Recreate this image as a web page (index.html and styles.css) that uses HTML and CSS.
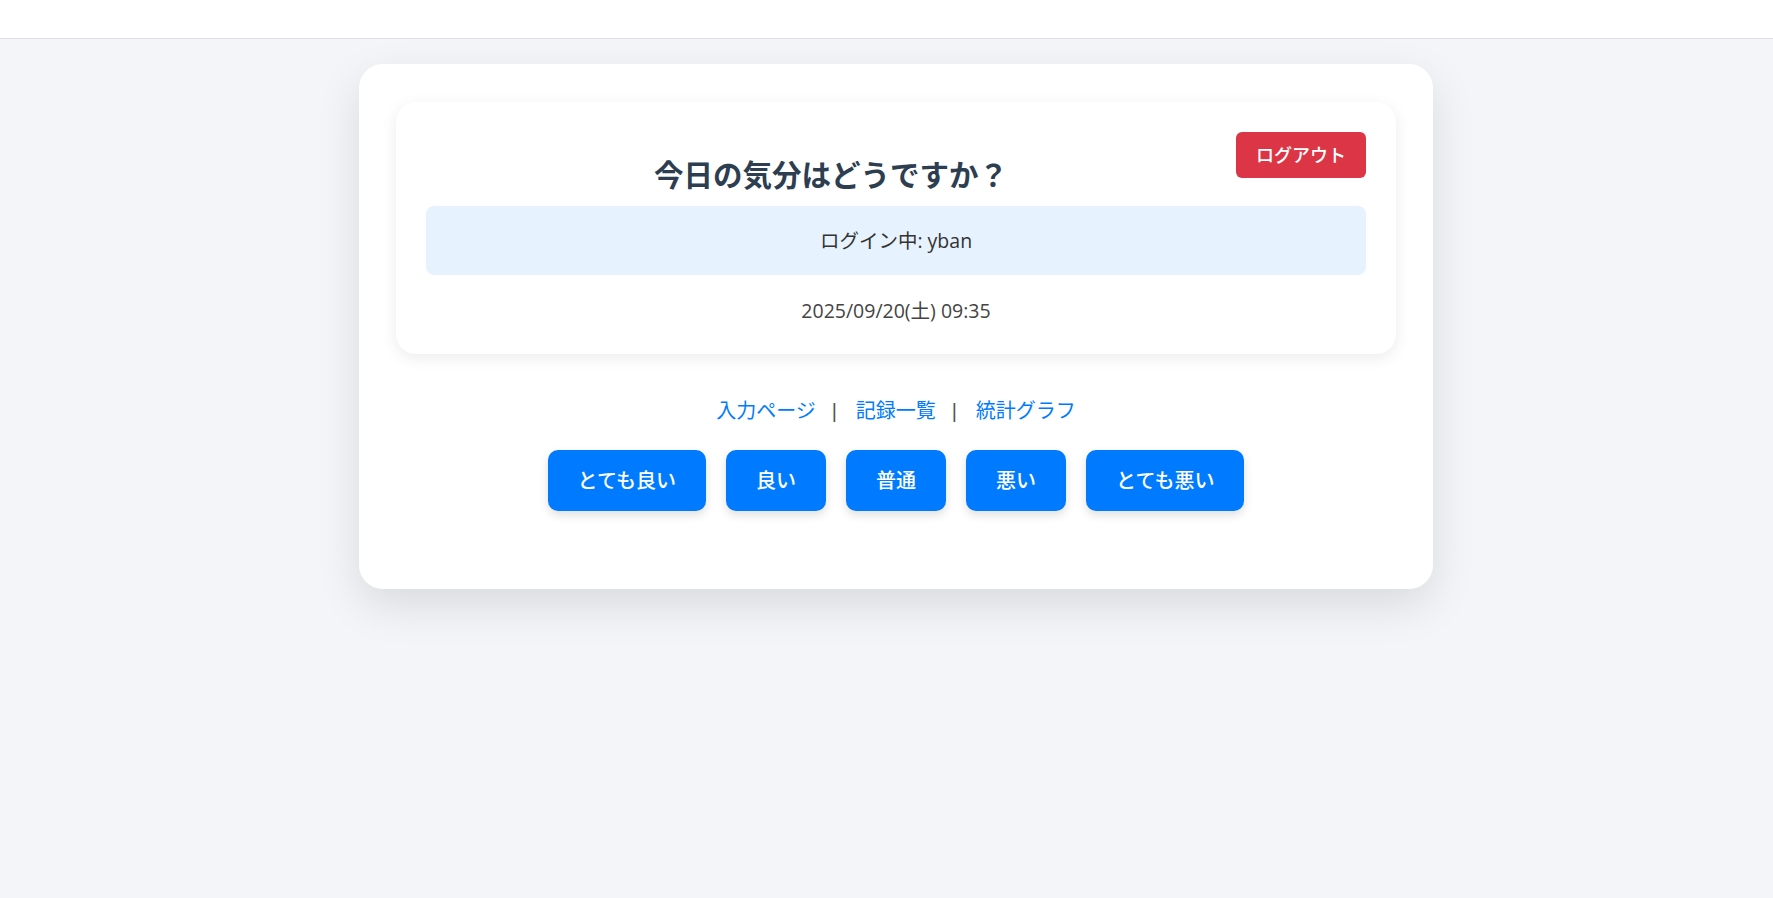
FILE: index.html
```html
<!DOCTYPE html>
<html lang="ja">
<head>
<meta charset="utf-8">
<title>気分記録</title>
<link rel="stylesheet" href="styles.css">
</head>
<body>
<header class="topbar"></header>
<main class="page">
  <section class="panel">
    <div class="status-card">
      <div class="status-head">
        <h1 class="title">今日の気分はどうですか？</h1>
        <button class="logout" type="button">ログアウト</button>
      </div>
      <div class="user-box">ログイン中: yban</div>
      <p class="date">2025/09/20(土) 09:35</p>
    </div>
    <nav class="links">
      <a href="#" class="link">入力ページ</a>
      <span class="sep">|</span>
      <a href="#" class="link">記録一覧</a>
      <span class="sep">|</span>
      <a href="#" class="link">統計グラフ</a>
    </nav>
    <div class="moods">
      <button class="mood" type="button">とても良い</button>
      <button class="mood" type="button">良い</button>
      <button class="mood" type="button">普通</button>
      <button class="mood" type="button">悪い</button>
      <button class="mood" type="button">とても悪い</button>
    </div>
  </section>
</main>
</body>
</html>
```

FILE: styles.css
```css
* {
  box-sizing: border-box;
}

html, body {
  margin: 0;
  padding: 0;
}

body {
  background: #f4f5f9;
  font-family: "Open Sans", "Noto Sans CJK JP", sans-serif;
  color: #333;
  min-height: 898px;
}

.topbar {
  height: 39px;
  background: #ffffff;
  border-bottom: 1px solid #e0e1e4;
}

.page {
  padding-left: 19px;
}

.panel {
  width: 1074px;
  margin: 25px auto 0;
  background: #ffffff;
  border-radius: 24px;
  padding: 38px 37px 40px;
  box-shadow: 0 16px 45px rgba(0, 0, 0, 0.11);
}

.status-card {
  background: #ffffff;
  border-radius: 20px;
  padding: 30px 30px 29px;
  box-shadow: 0 4px 16px rgba(0, 0, 0, 0.08);
}

.status-head {
  display: flex;
  align-items: flex-start;
}

.title {
  flex: 1;
  margin: 23px 0 0;
  text-align: center;
  font-size: 29.5px;
  line-height: 40px;
  font-weight: 700;
  color: #2c3e50;
}

.logout {
  border: none;
  background: #dc3545;
  color: #ffffff;
  font-family: inherit;
  font-size: 18px;
  line-height: 26px;
  font-weight: 500;
  padding: 10px 20px;
  border-radius: 6px;
}

.user-box {
  margin-top: 11px;
  background: #e6f2fe;
  border-radius: 8px;
  padding: 20px;
  text-align: center;
  font-size: 19.5px;
  line-height: 29px;
  color: #333;
}

.date {
  margin: 21px 0 0;
  text-align: center;
  font-size: 19.5px;
  line-height: 29px;
  color: #444;
}

.links {
  margin-top: 42px;
  display: flex;
  justify-content: center;
  align-items: center;
  gap: 16px;
  font-size: 20px;
  line-height: 30px;
}

.link {
  color: #007bff;
  text-decoration: none;
}

.sep {
  color: #555;
  font-family: "Liberation Sans", sans-serif;
  width: 5px;
  margin-right: 3px;
  text-align: center;
  display: inline-block;
}

.moods {
  margin: 24px 0 38px;
  display: flex;
  justify-content: center;
  gap: 20px;
}

.mood {
  border: none;
  background: #007bff;
  color: #ffffff;
  font-family: inherit;
  font-size: 20px;
  line-height: 29px;
  font-weight: 500;
  padding: 16px 30px;
  border-radius: 10px;
  box-shadow: 0 4px 10px rgba(0, 0, 0, 0.13);
}
```
